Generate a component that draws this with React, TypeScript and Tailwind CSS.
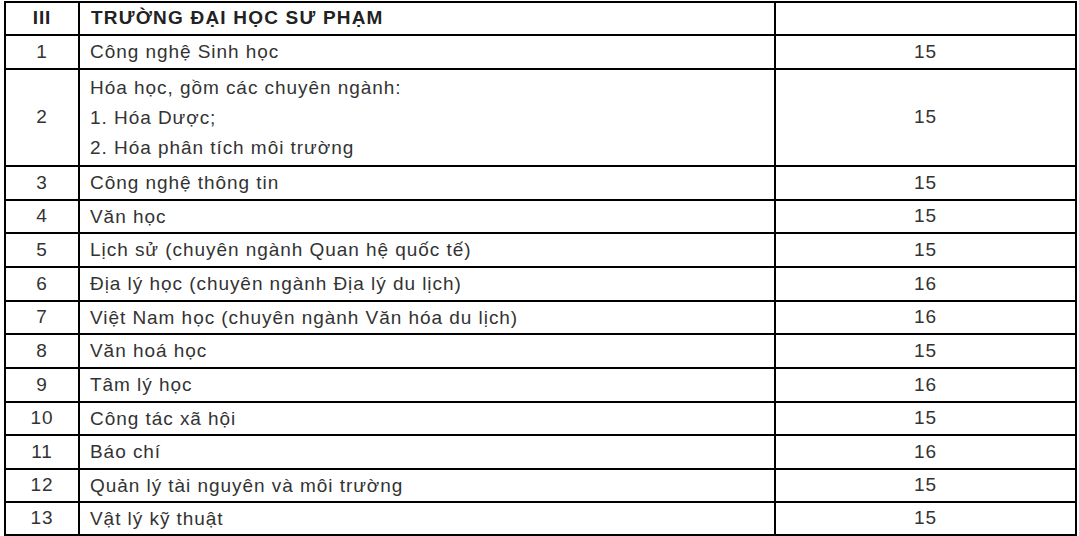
const rows: { n: string; name: string[]; score: string; h: number }[] = [
  { n: "1", name: ["Công nghệ Sinh học"], score: "15", h: 34 },
  {
    n: "2",
    name: ["Hóa học, gồm các chuyên ngành:", "1. Hóa Dược;", "2. Hóa phân tích môi trường"],
    score: "15",
    h: 97,
  },
  { n: "3", name: ["Công nghệ thông tin"], score: "15", h: 34 },
  { n: "4", name: ["Văn học"], score: "15", h: 33 },
  { n: "5", name: ["Lịch sử (chuyên ngành Quan hệ quốc tế)"], score: "15", h: 34 },
  { n: "6", name: ["Địa lý học (chuyên ngành Địa lý du lịch)"], score: "16", h: 34 },
  { n: "7", name: ["Việt Nam học (chuyên ngành Văn hóa du lịch)"], score: "16", h: 33 },
  { n: "8", name: ["Văn hoá học"], score: "15", h: 34 },
  { n: "9", name: ["Tâm lý học"], score: "16", h: 34 },
  { n: "10", name: ["Công tác xã hội"], score: "15", h: 33 },
  { n: "11", name: ["Báo chí"], score: "16", h: 34 },
  { n: "12", name: ["Quản lý tài nguyên và môi trường"], score: "15", h: 33 },
  { n: "13", name: ["Vật lý kỹ thuật"], score: "15", h: 33 },
];

export default function App() {
  return (
    <div className="w-[1079px] h-[536px] bg-white pl-1 pt-px overflow-hidden">
      <table
        className="border-collapse table-fixed w-[1071px] text-[19px] text-[#333] tracking-[0.95px]"
        style={{ fontFamily: '"Liberation Sans", Arial, sans-serif' }}
      >
        <colgroup>
          <col className="w-[74px]" />
          <col className="w-[696px]" />
          <col className="w-[301px]" />
        </colgroup>
        <tbody>
          {/* header */}
          <tr>
            <td className="border-2 border-black h-[33px] p-0 text-center font-bold text-[#222]">III</td>
            <td className="border-2 border-black h-[33px] py-0 pl-[11px] pr-[10px] font-bold text-[#222] tracking-[1.2px]">
              TRƯỜNG ĐẠI HỌC SƯ PHẠM
            </td>
            <td className="border-2 border-black h-[33px] p-0"></td>
          </tr>
          {rows.map((r) => (
            <tr key={r.n}>
              <td className="border-2 border-black p-0 text-center align-middle" style={{ height: r.h }}>
                {r.n}
              </td>
              <td className="border-2 border-black py-0 px-[10px] align-middle leading-[30px]" style={{ height: r.h }}>
                {r.name.map((l) => (
                  <div key={l}>{l}</div>
                ))}
              </td>
              <td className="border-2 border-black p-0 text-center align-middle" style={{ height: r.h }}>
                {r.score}
              </td>
            </tr>
          ))}
        </tbody>
      </table>
    </div>
  );
}
